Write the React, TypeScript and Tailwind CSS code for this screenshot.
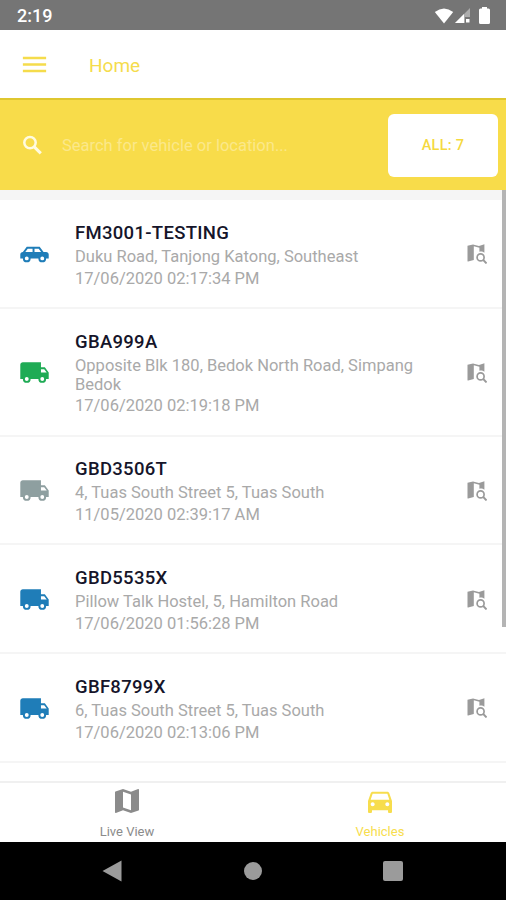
import { MdDirectionsCar, MdMap, MdMenu } from 'react-icons/md'

type Vehicle = {
  plate: string
  address: string
  time: string
  type: 'car' | 'truck'
  color: string
}

const vehicles: Vehicle[] = [
  {
    plate: 'FM3001-TESTING',
    address: 'Duku Road, Tanjong Katong, Southeast',
    time: '17/06/2020 02:17:34 PM',
    type: 'car',
    color: 'text-[#1f7db8]'
  },
  {
    plate: 'GBA999A',
    address: 'Opposite Blk 180, Bedok North Road, Simpang Bedok',
    time: '17/06/2020 02:19:18 PM',
    type: 'truck',
    color: 'text-[#1fab55]'
  },
  {
    plate: 'GBD3506T',
    address: '4, Tuas South Street 5, Tuas South',
    time: '11/05/2020 02:39:17 AM',
    type: 'truck',
    color: 'text-[#8e9fa0]'
  },
  {
    plate: 'GBD5535X',
    address: 'Pillow Talk Hostel, 5, Hamilton Road',
    time: '17/06/2020 01:56:28 PM',
    type: 'truck',
    color: 'text-[#1f7db8]'
  },
  {
    plate: 'GBF8799X',
    address: '6, Tuas South Street 5, Tuas South',
    time: '17/06/2020 02:13:06 PM',
    type: 'truck',
    color: 'text-[#1f7db8]'
  }
]

const CarIcon = () => (
  <svg viewBox="0 0 24 24" className="w-[31px] h-[31px]" fill="currentColor">
    <path d="M16,6L19,10H21C22.11,10 23,10.89 23,12V15H21A3,3 0 0,1 18,18A3,3 0 0,1 15,15H9A3,3 0 0,1 6,18A3,3 0 0,1 3,15H1V12C1,10.89 1.89,10 3,10L6,6H16M10.5,7.5H6.75L4.86,10H10.5V7.5M12,7.5V10H17.14L15.25,7.5H12M6,13.5A1.5,1.5 0 0,0 4.5,15A1.5,1.5 0 0,0 6,16.5A1.5,1.5 0 0,0 7.5,15A1.5,1.5 0 0,0 6,13.5M18,13.5A1.5,1.5 0 0,0 16.5,15A1.5,1.5 0 0,0 18,16.5A1.5,1.5 0 0,0 19.5,15A1.5,1.5 0 0,0 18,13.5Z" />
  </svg>
)

const TruckIcon = () => (
  <svg viewBox="0 0 24 24" className="w-[31px] h-[31px]" fill="currentColor">
    <path d="M18,18.5A1.5,1.5 0 0,1 16.5,17A1.5,1.5 0 0,1 18,15.5A1.5,1.5 0 0,1 19.5,17A1.5,1.5 0 0,1 18,18.5M19.5,9.5L21.46,12H17V9.5M6,18.5A1.5,1.5 0 0,1 4.5,17A1.5,1.5 0 0,1 6,15.5A1.5,1.5 0 0,1 7.5,17A1.5,1.5 0 0,1 6,18.5M20,8H17V4H3C1.89,4 1,4.89 1,6V17H3A3,3 0 0,0 6,20A3,3 0 0,0 9,17H15A3,3 0 0,0 18,20A3,3 0 0,0 21,17H23V12L20,8Z" />
  </svg>
)

const MapSearchIcon = () => (
  <svg viewBox="0 0 20 20" className="w-5 h-5 text-[#9a9a9a]" fill="currentColor">
    <path d="M0.5 1.8 L6 0.5 L12 2 L17.4 0.3 V8.8 C16 7.8 14.2 7.2 12.4 7.8 V3.8 L6.8 2.3 V16 L1.1 17.6 Q0.5 17.7 0.5 17 Z" />
    <circle cx="13.6" cy="13.4" r="3.5" fill="none" stroke="currentColor" strokeWidth="1.7" />
    <path d="M16 15.8 L19.6 19.4" stroke="currentColor" strokeWidth="2" />
  </svg>
)

const SearchIcon = () => (
  <svg viewBox="0 0 25 25" className="w-[25px] h-[25px] text-[#fffbe0]" fill="none" stroke="currentColor">
    <circle cx="10" cy="9.6" r="5.7" strokeWidth="2.5" />
    <path d="M14 13.6 L20.8 20.4" strokeWidth="3" />
  </svg>
)

const StatusBar = () => (
  <div className="h-[30px] shrink-0 bg-[#757575] flex items-center justify-between pl-[17px] pr-4 pt-px">
    <span className="text-[18px] font-medium text-white">2:19</span>
    <div className="flex items-center text-white">
      <svg viewBox="0 0 20 16" className="w-5 h-4 -ml-px" fill="currentColor">
        <path d="M0.8 4 Q10 -3 19.2 4 L10 15.4 Z" />
      </svg>
      <svg viewBox="0 0 15 15" className="w-[15px] h-[15px] ml-px" fill="currentColor">
        <path d="M0 15 L15 0 V9 H10 V15 Z" opacity="0.4" />
        <path d="M0 15 L9 6 V15 Z" />
        <path d="M11 11 H14.5 V14.5 H11 Z" />
      </svg>
      <svg viewBox="0 0 11 17" className="w-[11px] h-[17px] ml-[9px]" fill="currentColor">
        <path d="M3 0 H8 V1.5 H9.5 Q11 1.5 11 3 V15.5 Q11 17 9.5 17 H1.5 Q0 17 0 15.5 V3 Q0 1.5 1.5 1.5 H3 Z" />
      </svg>
    </div>
  </div>
)

const VehicleRow = ({ vehicle }: { vehicle: Vehicle }) => (
  <div className="flex items-center border-b-2 border-[#f5f5f5] pt-[20.8px] pb-[19.1px] px-[19px]">
    <div className={vehicle.color}>
      {vehicle.type === 'car' ? <CarIcon /> : <TruckIcon />}
    </div>
    <div className="w-[350px] ml-[25px]">
      <h2 className="text-[18.5px] leading-6 font-medium tracking-[0.3px] text-[#15152a]">
        {vehicle.plate}
      </h2>
      <p className="mt-[2.1px] text-[16.5px] leading-[19px] text-[#a9a9a9]">
        {vehicle.address}
      </p>
      <p className="mt-[2.8px] text-[16.5px] leading-[19px] text-[#a9a9a9]">
        {vehicle.time}
      </p>
    </div>
    <div className="ml-auto">
      <MapSearchIcon />
    </div>
  </div>
)

const App = () => {
  return (
    <div className="w-[506px] h-[900px] flex flex-col overflow-hidden bg-white font-['Roboto',sans-serif]">
      <StatusBar />

      {/* Header */}
      <header className="h-[68.4px] shrink-0 flex items-center pl-[19px] pt-px text-[#f5dc4c]">
        <MdMenu className="w-[31px] h-[31px]" />
        <h1 className="ml-[39px] mt-0.5 text-[19px] leading-6">Home</h1>
      </header>

      {/* Search */}
      <div className="h-[91.6px] shrink-0 flex items-center bg-[#f8dc4a] border-t-2 border-[#dfc72f] pl-5 pr-2">
        <SearchIcon />
        <span className="ml-[17px] mt-0.5 text-[16.5px] text-[#fbe88a]">
          Search for vehicle or location...
        </span>
        <button className="ml-auto w-[110px] h-[63px] rounded-md bg-white pt-0.5 text-[14.5px] font-medium tracking-[0.3px] text-[#f5d93f]">
          ALL: 7
        </button>
      </div>

      {/* Vehicle list */}
      <main className="relative h-[591px] shrink-0 overflow-hidden">
        <div className="h-2.5 bg-[#f5f5f5]" />
        {vehicles.map((vehicle) => (
          <VehicleRow key={vehicle.plate} vehicle={vehicle} />
        ))}
        <div className="absolute right-0 top-0 w-[4.5px] h-[437px] bg-[#b4b4b4]" />
      </main>

      {/* Tabs */}
      <nav className="h-[61px] shrink-0 grid grid-cols-2 border-t-2 border-[#f0f0f0] text-[13px]">
        <div className="flex flex-col items-center pt-0.5 pl-px text-[#8b8b8b]">
          <MdMap className="w-8 h-8" />
          <span className="mt-[5px] leading-5">Live View</span>
        </div>
        <div className="flex flex-col items-center pt-0.5 pl-px text-[#f7dd4d]">
          <MdDirectionsCar className="w-8 h-8" />
          <span className="mt-[5px] leading-5">Vehicles</span>
        </div>
      </nav>

      {/* Android navigation */}
      <footer className="flex-1 flex items-center bg-black text-[#9b9b9b]">
        <svg viewBox="0 0 20 22" className="w-5 h-[22px] ml-[102px]" fill="currentColor">
          <path d="M19.5 0.5 V21.5 L0.5 11 Z" />
        </svg>
        <div className="w-[18px] h-[18px] ml-[122px] rounded-full bg-[#9b9b9b]" />
        <div className="w-5 h-5 ml-[121px] rounded-xs bg-[#9b9b9b]" />
      </footer>
    </div>
  )
}

export default App
